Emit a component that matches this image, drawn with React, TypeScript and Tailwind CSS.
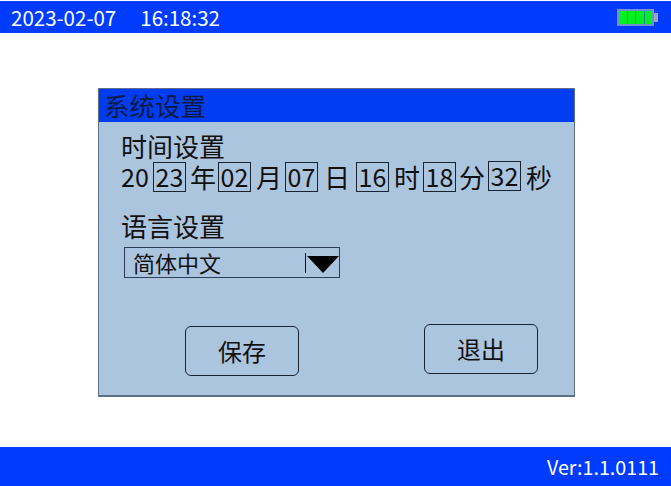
import { clsx } from "clsx";

const cjk = "font-['Noto_Sans_CJK_SC','Noto_Sans',sans-serif]";

function Box({ value, raised }: { value: string; raised?: boolean }) {
  return (
    <span
      className={clsx(
        "flex h-[30px] w-[33px] items-center justify-center border border-[#1a2330] text-[25px] leading-none",
        raised && "mb-[2px]",
      )}
    >
      {value}
    </span>
  );
}

function Battery() {
  return (
    <div className="flex items-center">
      <div className="flex h-[17px] w-[37px] gap-px border-2 border-[#6f8fd0] bg-[#2a80a0]">
        <span className="flex-1 bg-[#00f020]" />
        <span className="flex-1 bg-[#00f020]" />
        <span className="flex-1 bg-[#00f020]" />
        <span className="flex-1 bg-[#00f020]" />
      </div>
      <span className="h-[9px] w-[4px] bg-[#9aa5c0]" />
    </div>
  );
}

export default function App() {
  return (
    <div className={`${cjk} flex h-[486px] w-[671px] flex-col overflow-hidden bg-white pt-px text-[#111]`}>
      <header className="flex h-[32px] shrink-0 items-center justify-between bg-[#003cff] pl-[11px] pr-[13px] text-[20.5px] text-white">
        <div className="flex gap-[24px]">
          <span>2023-02-07</span>
          <span>16:18:32</span>
        </div>
        <Battery />
      </header>

      <main className="flex-1 pl-[98px] pt-[55px]">
        <section className="h-[309px] w-[477px] border border-b-2 border-[#5f6f85] bg-[#acc5df]">
          <h1 className="flex h-[33px] items-center bg-[#003cf0] pb-[2px] pl-[5px] text-[25.5px] leading-none text-[#0a1a40]">
            系统设置
          </h1>

          <div className="pl-[22px] pt-[9px]">
            <h2 className="text-[26px] leading-[30px]">时间设置</h2>
            <div className="flex h-[31px] items-center text-[26px] leading-none">
              <span className="w-[32px] text-[25px]">20</span>
              <Box value="23" />
              <span className="w-[32px] pl-[2px] text-center">年</span>
              <Box value="02" />
              <span className="w-[34px] pl-[2px] text-center">月</span>
              <Box value="07" />
              <span className="w-[38px] text-center">日</span>
              <Box value="16" />
              <span className="w-[34px] pl-[2px] text-center">时</span>
              <Box value="18" />
              <span className="w-[32px] text-center">分</span>
              <Box value="32" raised />
              <span className="w-[32px] pl-[4px] text-center">秒</span>
            </div>

            <h2 className="mt-[19px] text-[26px] leading-[30px]">语言设置</h2>
            <div className="ml-[3px] mt-[6px] flex h-[31px] w-[216px] items-center border border-[#2c3e58] pl-[8px] text-[22px] leading-none">
              <span className="flex-1 pb-[2px]">简体中文</span>
              <span className="h-[20px] w-px bg-[#111]" />
              <svg viewBox="0 0 32 17" className="ml-[1px] mt-[4px] h-[17px] w-[32px]">
                <path d="M0 0H32L16 17Z" fill="#000" />
              </svg>
            </div>

            <div className="ml-[64px] mt-[46px] flex w-[353px] items-start justify-between text-[24px] leading-none">
              <button className="mt-[2px] flex h-[50px] w-[114px] items-center justify-center rounded-[6px] border border-[#1a2330]">
                保存
              </button>
              <button className="flex h-[50px] w-[114px] items-center justify-center rounded-[6px] border border-[#1a2330]">
                退出
              </button>
            </div>
          </div>
        </section>
      </main>

      <footer className="flex h-[39px] shrink-0 items-center justify-end bg-[#003cff] pr-[12px] text-[19.7px] text-white">
        Ver:1.1.0111
      </footer>
    </div>
  );
}
